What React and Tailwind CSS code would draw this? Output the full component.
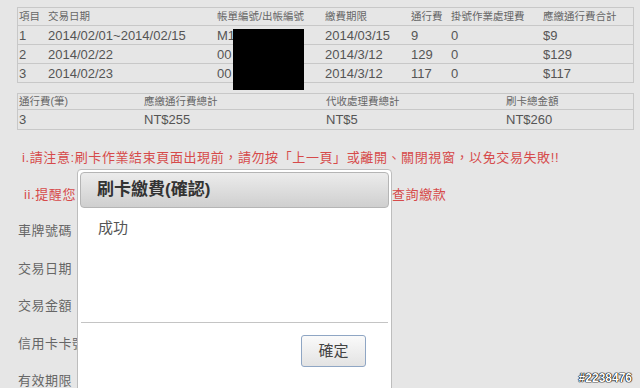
import React from 'react';

const font = { fontFamily: '"Liberation Sans", "Noto Sans CJK TC", sans-serif' };

const rows = [
  ['1', '2014/02/01~2014/02/15', 'M1', '2014/03/15', '9', '0', '$9'],
  ['2', '2014/02/22', '00', '2014/3/12', '129', '0', '$129'],
  ['3', '2014/02/23', '00', '2014/3/12', '117', '0', '$117'],
];

const labels = ['車牌號碼', '交易日期', '交易金額', '信用卡卡號', '有效期限'];

const App = () => {
  return (
    <div
      className="relative w-[640px] h-[388px] overflow-hidden bg-[#e6e6e6] text-[#555]"
      style={font}
    >
      {/* detail table */}
      <div className="ml-[17px] mt-[7px] w-[617px] border border-[#c8c8c8]">
        <div className="grid grid-cols-[29px_169px_108px_86px_40px_92px_1fr] h-[17px] items-center text-[10.5px] text-[#666]">
          <div className="pl-[1px]">項目</div>
          <div className="pl-[1px]">交易日期</div>
          <div className="pl-[1px]">帳單編號/出帳編號</div>
          <div className="pl-[1px]">繳費期限</div>
          <div className="pl-[1px]">通行費</div>
          <div className="pl-[1px]">掛號作業處理費</div>
          <div className="pl-[1px]">應繳通行費合計</div>
        </div>
        {rows.map((r) => (
          <div
            key={r[0]}
            className="grid grid-cols-[29px_169px_108px_86px_40px_92px_1fr] h-[19px] items-center border-t border-[#c8c8c8] text-[13px]"
          >
            {r.map((c, i) => (
              <div key={i} className="pl-[1px] whitespace-nowrap">
                {c}
              </div>
            ))}
          </div>
        ))}
      </div>

      {/* summary table */}
      <div className="ml-[17px] mt-[10px] w-[617px] border border-[#c8c8c8]">
        <div className="grid grid-cols-[125px_182px_180px_1fr] h-[15px] items-center text-[10.5px] text-[#666]">
          <div className="pl-[1px]">通行費(筆)</div>
          <div className="pl-[1px]">應繳通行費總計</div>
          <div className="pl-[1px]">代收處理費總計</div>
          <div className="pl-[1px]">刷卡總金額</div>
        </div>
        <div className="grid grid-cols-[125px_182px_180px_1fr] h-[20px] items-center border-t border-[#c8c8c8] text-[13px]">
          <div className="pl-[1px]">3</div>
          <div className="pl-[1px]">NT$255</div>
          <div className="pl-[1px]">NT$5</div>
          <div className="pl-[1px]">NT$260</div>
        </div>
      </div>

      {/* notices */}
      <div className="mt-[18px] ml-[22px] text-[13px] tracking-[0.6px] text-[#d64a4a] whitespace-nowrap">
        i.請注意:刷卡作業結束頁面出現前，請勿按「上一頁」或離開、關閉視窗，以免交易失敗!!
      </div>
      <div className="mt-[17px] ml-[24px] flex text-[13px] tracking-[0.6px] text-[#d64a4a] whitespace-nowrap">
        <span className="w-[368px]">ii.提醒您</span>
        <span>查詢繳款</span>
      </div>

      {/* form labels */}
      <div className="mt-[18px] ml-[18px] flex flex-col gap-[20.5px] text-[13px] tracking-[0.5px] text-[#666]">
        {labels.map((l) => (
          <div key={l} className="h-[17px] leading-[17px] whitespace-nowrap">
            {l}
          </div>
        ))}
      </div>

      {/* dialog */}
      <div className="absolute left-[77px] top-[169px] w-[315px] h-[230px] bg-white border border-[#bdbdbd] rounded-[4px] p-[2px] flex flex-col">
        <div className="h-[36px] rounded-[4px] border border-[#b5b5b5] bg-gradient-to-b from-[#ececec] to-[#cfcfcf] flex items-center pl-[16px] text-[17px] font-bold text-[#333]">
          刷卡繳費(確認)
        </div>
        <div className="pl-[18px] pt-[9px] h-[114px] text-[15px] text-[#555]">成功</div>
        <div className="mx-[1px] border-t border-[#c4c4c4]"></div>
        <div className="flex justify-end pr-[23px] pt-[12px]">
          <button className="w-[65px] h-[32px] rounded-[3px] border border-[#8fa6c4] bg-gradient-to-b from-[#fafafa] to-[#e3e3e3] text-[15px] text-[#444]">
            確定
          </button>
        </div>
      </div>

      {/* redaction */}
      <div className="absolute left-[233px] top-[29px] w-[71px] h-[61px] bg-black"></div>

      {/* watermark */}
      <div
        className="absolute right-[8px] bottom-[1px] text-[12px] font-bold text-white"
        style={{ textShadow: '0 0 1px #000, 0 0 1px #000, 0 0 1px #000, 0 0 1px #000' }}
      >
        #2238476
      </div>
    </div>
  );
};

export default App;
